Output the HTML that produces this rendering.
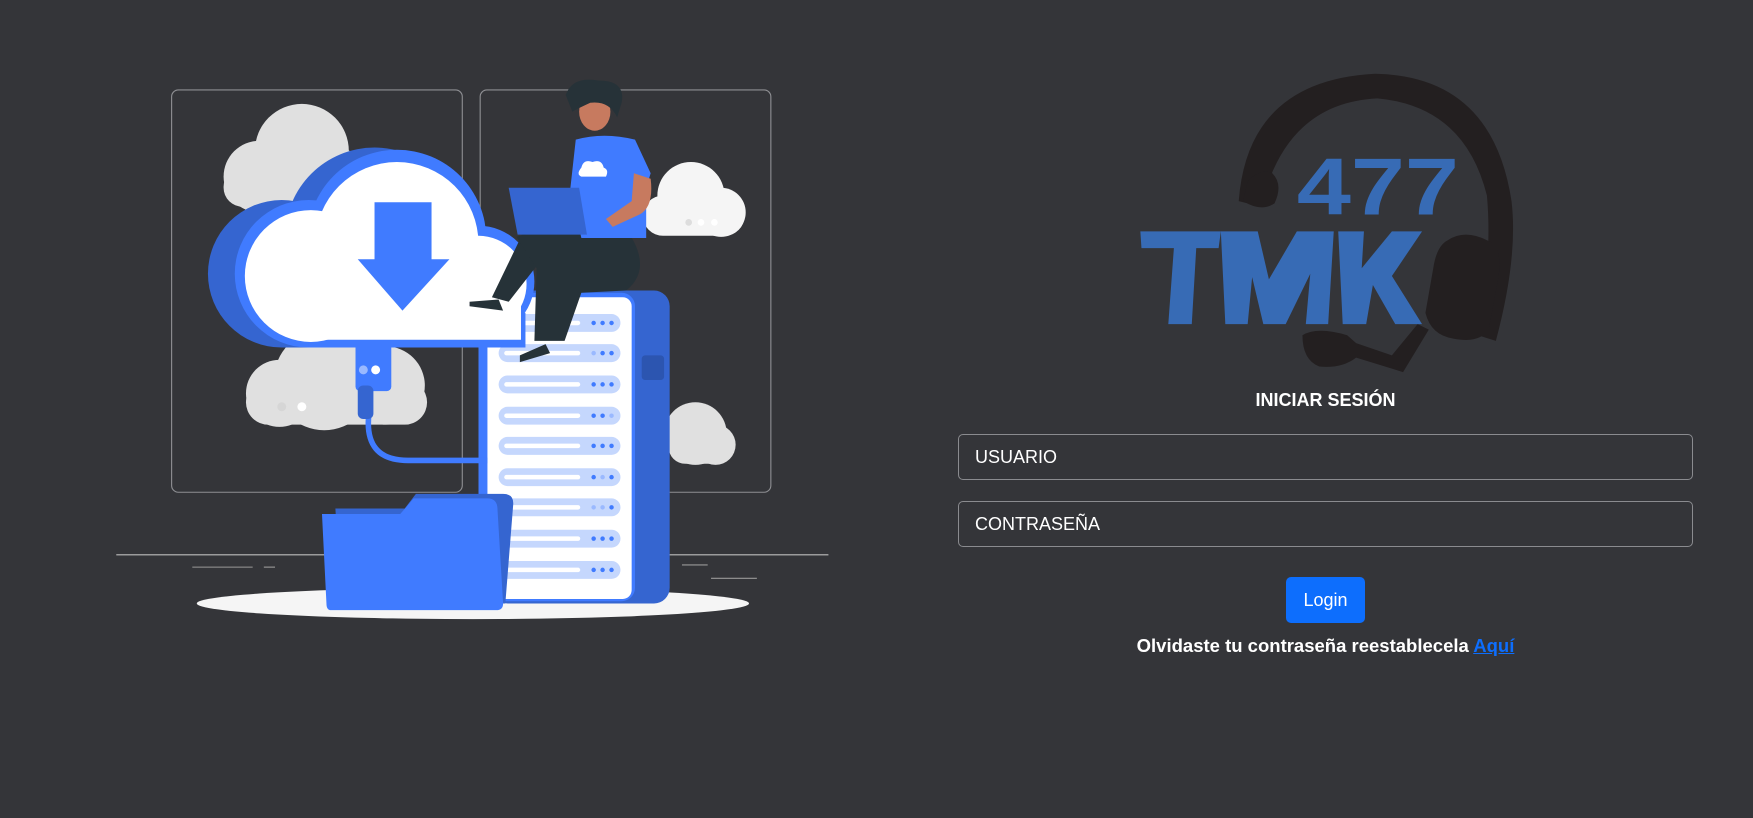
<!DOCTYPE html>
<html><head><meta charset="utf-8"><style>
html,body{margin:0;padding:0;background:#343539;width:1753px;height:818px;overflow:hidden;font-family:"Liberation Sans",sans-serif;}
svg.bg{position:absolute;left:0;top:0;width:1753px;height:818px}
.h{position:absolute;left:958px;width:735px;top:390px;text-align:center;color:#fff;font-weight:bold;font-size:18px}
.in{position:absolute;left:958px;border:1px solid #8a8b8f;border-radius:5px;color:#fff;font-size:18px;line-height:44px;padding-left:16px;box-sizing:border-box;width:735px;height:46px}
.btn{position:absolute;left:1286px;top:577px;width:79px;height:46px;background:#0d6efd;border-radius:5px;color:#fff;font-size:18px;line-height:46px;text-align:center}
.f{position:absolute;left:950px;width:751px;top:635px;text-align:center;color:#fff;font-weight:bold;font-size:18.5px}
.f a{color:#0d6efd;text-decoration:underline}
</style></head><body>
<svg class="bg" viewBox="0 0 1568 732" preserveAspectRatio="none">
<rect x="153.5" y="80.5" width="260" height="360" rx="6" fill="none" stroke="#8e8f93" stroke-width="1"/>
<rect x="429.5" y="80.5" width="260" height="360" rx="6" fill="none" stroke="#8e8f93" stroke-width="1"/>
<g fill="#e0e0e0">
<circle cx="270" cy="135" r="42"/><circle cx="232" cy="158" r="32"/><circle cx="300" cy="160" r="28"/><rect x="200" y="150" width="130" height="35" rx="17"/>
<circle cx="290" cy="340" r="45"/><circle cx="250" cy="352" r="30"/><circle cx="345" cy="345" r="35"/><rect x="220" y="340" width="162" height="40" rx="20"/>
<circle cx="622" cy="388" r="28"/><circle cx="640" cy="398" r="18"/><rect x="598" y="385" width="59" height="30" rx="15"/>
</g>
<g fill="#f5f5f5"><circle cx="618" cy="175" r="30"/><circle cx="645" cy="190" r="22"/><rect x="575" y="175" width="91" height="36" rx="18"/></g>
<circle cx="252" cy="364" r="4" fill="#d6d6d6"/><circle cx="270" cy="364" r="4" fill="#fff"/>
<circle cx="616" cy="199" r="3" fill="#ddd"/><circle cx="627" cy="199" r="3" fill="#fff"/><circle cx="639" cy="199" r="3" fill="#fff"/>
<line x1="104" y1="496.5" x2="741" y2="496.5" stroke="#bdbdbd" stroke-width="1"/>
<line x1="172" y1="507.5" x2="226" y2="507.5" stroke="#999" /><line x1="236" y1="507.5" x2="246" y2="507.5" stroke="#999"/>
<line x1="610" y1="505.5" x2="633" y2="505.5" stroke="#999"/><line x1="636" y1="517.5" x2="677" y2="517.5" stroke="#999"/>
<ellipse cx="423" cy="540" rx="247" ry="14" fill="#f5f5f5"/>
<rect x="440" y="260" width="159" height="280" rx="14" fill="#3565d0"/>
<rect x="428" y="262" width="140" height="276" rx="12" fill="#407bff"/>
<rect x="436" y="266" width="129" height="270" rx="8" fill="#fff"/>
<rect x="574" y="318" width="20" height="22" rx="3" fill="#2c55b0"/>
<g fill="#c5d7fd">
<rect x="446" y="281" width="109" height="16" rx="8"/><rect x="446" y="308" width="109" height="16" rx="8"/><rect x="446" y="336" width="109" height="16" rx="8"/><rect x="446" y="364" width="109" height="16" rx="8"/><rect x="446" y="391" width="109" height="16" rx="8"/><rect x="446" y="419" width="109" height="16" rx="8"/><rect x="446" y="446" width="109" height="16" rx="8"/><rect x="446" y="474" width="109" height="16" rx="8"/><rect x="446" y="502" width="109" height="16" rx="8"/>
</g>
<g fill="#fff">
<rect x="451" y="287" width="68" height="4" rx="2"/><rect x="451" y="314" width="68" height="4" rx="2"/><rect x="451" y="342" width="68" height="4" rx="2"/><rect x="451" y="370" width="68" height="4" rx="2"/><rect x="451" y="397" width="68" height="4" rx="2"/><rect x="451" y="425" width="68" height="4" rx="2"/><rect x="451" y="452" width="68" height="4" rx="2"/><rect x="451" y="480" width="68" height="4" rx="2"/><rect x="451" y="508" width="68" height="4" rx="2"/>
</g>
<g fill="#407bff">
<circle cx="531" cy="289" r="2"/><circle cx="539" cy="289" r="2"/><circle cx="547" cy="289" r="2"/>
<circle cx="531" cy="316" r="2" fill="#9ab9ff"/><circle cx="539" cy="316" r="2"/><circle cx="547" cy="316" r="2"/>
<circle cx="531" cy="344" r="2"/><circle cx="539" cy="344" r="2"/><circle cx="547" cy="344" r="2"/>
<circle cx="531" cy="372" r="2"/><circle cx="539" cy="372" r="2"/><circle cx="547" cy="372" r="2" fill="#9ab9ff"/>
<circle cx="531" cy="399" r="2"/><circle cx="539" cy="399" r="2"/><circle cx="547" cy="399" r="2"/>
<circle cx="531" cy="427" r="2"/><circle cx="539" cy="427" r="2" fill="#9ab9ff"/><circle cx="547" cy="427" r="2"/>
<circle cx="531" cy="454" r="2" fill="#9ab9ff"/><circle cx="539" cy="454" r="2" fill="#9ab9ff"/><circle cx="547" cy="454" r="2"/>
<circle cx="531" cy="482" r="2"/><circle cx="539" cy="482" r="2"/><circle cx="547" cy="482" r="2"/>
<circle cx="531" cy="510" r="2"/><circle cx="539" cy="510" r="2"/><circle cx="547" cy="510" r="2"/>
</g>
<path d="M330 370 Q325 412 365 412 L436 412" fill="none" stroke="#407bff" stroke-width="5"/>
<rect x="318" y="300" width="32" height="50" rx="4" fill="#407bff"/>
<rect x="320" y="345" width="14" height="30" rx="5" fill="#3565d0"/>
<circle cx="325" cy="331" r="4" fill="#9ab9ff"/><circle cx="336" cy="331" r="4" fill="#fff"/>
<!-- cloud -->
<g fill="#3565d0">
<circle cx="335" cy="212" r="80"/><circle cx="252" cy="245" r="66"/><circle cx="410" cy="250" r="50"/><path d="M252 300 H450 V311 H252 Z"/>
</g>
<g fill="#407bff">
<circle cx="355" cy="214" r="80"/><circle cx="276" cy="245" r="66"/><circle cx="428" cy="252" r="50"/><path d="M276 280 H470 V311 H276 Z"/>
</g>
<g fill="#fff">
<circle cx="355" cy="218" r="73"/><circle cx="278" cy="247" r="59"/><circle cx="428" cy="254" r="43"/><path d="M278 270 H466 V304 H278 Z"/>
</g>
<path d="M335 181 H386 V232 H402 L360 278 L320 232 H335 Z" fill="#407bff"/>
<path d="M300 455 H362 L372 442 H450 Q460 442 459 452 L452 540 H305 Z" fill="#3565d0"/>
<path d="M288 460 H358 L370 446 H436 Q445 446 445 456 L450 540 Q450 546 444 546 H296 Q292 546 292 540 Z" fill="#407bff"/>
<!-- person -->
<path d="M468 208 L498 215 L455 270 L440 266 Z" fill="#263238"/>
<path d="M462 212 Q480 205 560 205 Q585 240 560 260 L520 262 L505 305 L478 305 L480 240 Z" fill="#263238"/>
<path d="M420 270 L446 268 L450 278 L420 274 Z" fill="#263238"/>
<path d="M465 318 L488 308 L492 316 L465 324 Z" fill="#263238"/>
<path d="M515 125 Q540 118 568 125 L582 155 L578 168 L578 213 L520 213 L510 170 Z" fill="#407bff"/>
<path d="M567 155 L582 160 Q585 185 572 192 L548 203 L542 196 L565 180 Z" fill="#c77a5f"/>
<ellipse cx="532" cy="100" rx="14" ry="17" fill="#c77a5f"/>
<path d="M506 85 Q512 68 535 72 Q560 72 556 92 L552 105 Q545 90 528 92 Q515 98 512 100 Z" fill="#263238"/>
<path d="M520 150 Q522 142 530 145 Q538 142 540 150 Q545 152 542 158 H520 Q515 156 520 150Z" fill="#fff"/>
<path d="M455 168 H518 L525 210 H463 Z" fill="#3565d0"/>
<!-- logo -->
<path d="M1108 180 Q1116 72 1230 66 Q1335 68 1352 180 Q1358 230 1338 305 L1322 300 Q1335 230 1330 175 Q1310 95 1232 88 Q1150 92 1128 185 Z" fill="#231f20"/>
<path d="M1138 155 Q1148 165 1140 182 Q1128 190 1112 180 L1116 162 Q1128 150 1138 155Z" fill="#231f20"/>
<path d="M1295 215 Q1310 205 1330 215 Q1345 220 1340 250 L1332 293 Q1325 308 1300 303 Q1280 300 1275 280 L1282 240 Q1285 220 1295 215 Z" fill="#231f20"/>
<path d="M1165 300 Q1178 292 1205 300 L1213 307 L1245 318 L1268 290 L1278 295 L1255 333 L1213 320 Q1200 330 1180 328 Q1165 322 1165 300 Z" fill="#231f20"/>
<path d="M1020 207 H1092 L1090 222 H1070 L1066 290 H1045 L1050 222 H1021 Z" fill="#376bb5"/>
<path d="M1092 207 H1125 L1135 250 L1160 207 H1193 L1188 290 H1168 L1172 245 L1150 290 H1130 L1120 248 L1116 290 H1096 Z" fill="#376bb5"/>
<path d="M1197 207 H1220 L1218 240 L1245 207 H1272 L1245 247 L1272 290 H1248 L1228 255 L1222 290 H1201 Z" fill="#376bb5"/>
<text x="1160" y="192" font-family="Liberation Sans" font-weight="bold" font-size="72" fill="#376bb5" textLength="145" lengthAdjust="spacingAndGlyphs">477</text>
</svg>
<div class="h">INICIAR SESIÓN</div>
<div class="in" style="top:434px">USUARIO</div>
<div class="in" style="top:501px">CONTRASEÑA</div>
<div class="btn">Login</div>
<div class="f">Olvidaste tu contraseña reestablecela <a>Aquí</a></div>
</body></html>
